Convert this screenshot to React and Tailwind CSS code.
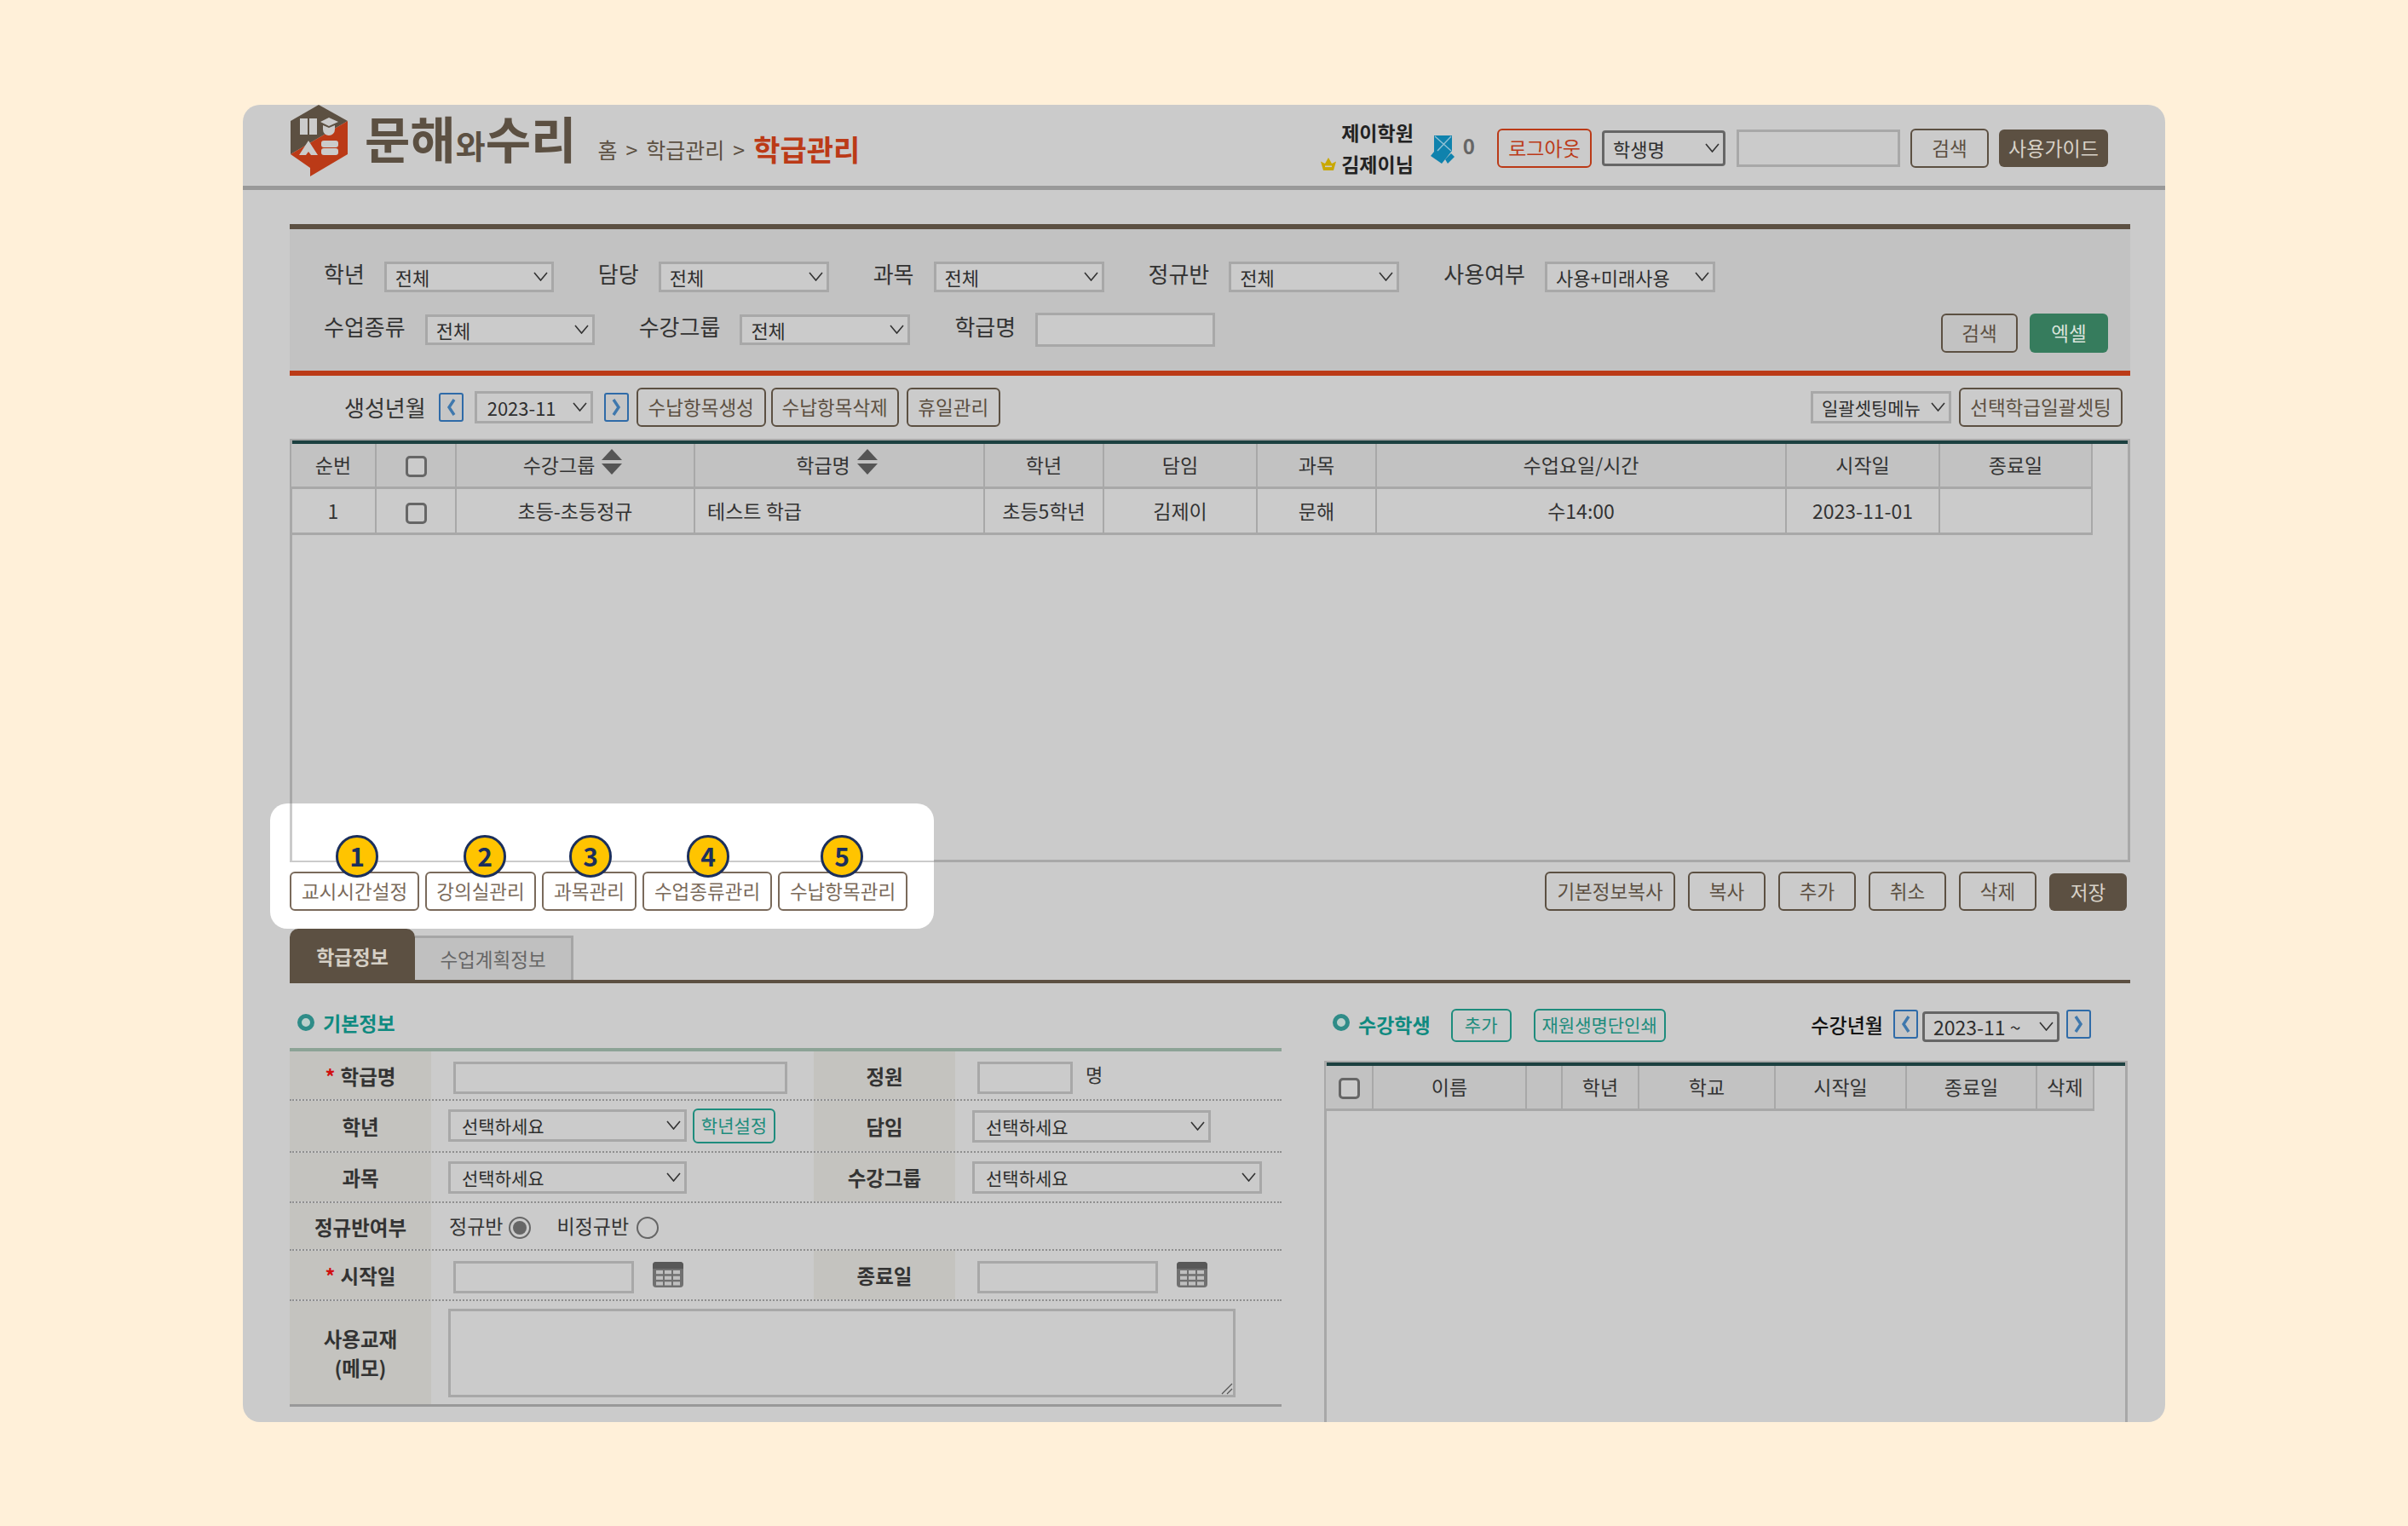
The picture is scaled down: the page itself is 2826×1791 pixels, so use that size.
import React from "react";

const Chevron = () => (
  <svg width="17" height="11" viewBox="0 0 17 11" fill="none" className="shrink-0">
    <path d="M1 1l7.5 9L16 1" stroke="#333" strokeWidth="1.6" />
  </svg>
);

const Sel = ({ className, children }) => (
  <div
    className={`flex shrink-0 items-center justify-between border-[3px] bg-[#cbcbcb] pl-[10px] pr-[4px] text-[22px] text-[#2f2f2f] ${className}`}
  >
    <span className="pt-[2px]">{children}</span>
    <Chevron />
  </div>
);

const Inp = ({ className }) => (
  <div className={`shrink-0 border-[3px] border-[#a8a8a8] bg-[#cbcbcb] ${className}`} />
);

const Btn = ({ className, children }) => (
  <div
    className={`flex h-[46px] shrink-0 items-center justify-center rounded-[6px] border-[2px] border-[#5c5042] text-[22.5px] text-[#5c5042] ${className}`}
  >
    {children}
  </div>
);

const TealBtn = ({ className, children }) => (
  <div
    className={`flex shrink-0 items-center justify-center rounded-[6px] border-[2px] border-[#1e8c7d] text-[21px] text-[#1e8c7d] ${className}`}
  >
    {children}
  </div>
);

const Arrow = ({ dir }) => (
  <div className="flex h-[34px] w-[29px] shrink-0 items-center justify-center rounded-[3px] border-[2px] border-[#2f6ba8] bg-[#c6c6c6]">
    <svg width="13" height="22" viewBox="0 0 13 22" fill="none">
      <path
        d={dir === "left" ? "M10 2L4 11l6 9" : "M3 2l6 9-6 9"}
        stroke="#3f78ad"
        strokeWidth="3.4"
      />
    </svg>
  </div>
);

const Check = () => (
  <div className="mx-auto mt-[6px] h-[25px] w-[25px] rounded-[5px] border-[3px] border-[#666] bg-[#cbcbcb]" />
);

const Sort = () => (
  <svg width="24" height="30" viewBox="0 0 24 30" className="ml-[8px] shrink-0 -translate-y-[3px]">
    <path d="M12 0l12 13H0z" fill="#555" />
    <path d="M0 17h24L12 30z" fill="#555" />
  </svg>
);

const Dot = () => (
  <span className="block h-[20px] w-[20px] shrink-0 rounded-full border-[5px] border-[#2f8c88] bg-[#bcd0cc]" />
);

const Radio = ({ on }) => (
  <span className="flex h-[26px] w-[26px] shrink-0 items-center justify-center rounded-full border-[2px] border-[#666]">
    {on && <span className="h-[16px] w-[16px] rounded-full bg-[#666]" />}
  </span>
);

const Calendar = () => (
  <svg width="36" height="30" viewBox="0 0 36 30" className="mt-[1px] ml-[22px] shrink-0">
    <rect width="36" height="30" rx="4" fill="#707070" />
    <path d="M0 8V4a4 4 0 014-4h28a4 4 0 014 4v4z" fill="#585858" />
    {[4, 14, 24].map((x) =>
      [10, 16.7, 23.3].map((y) => <rect key={`${x}-${y}`} x={x} y={y} width="8" height="4.2" fill="#bfbfbf" />)
    )}
  </svg>
);

const Logo = () => (
  <svg width="68" height="84" viewBox="0 0 68 84" className="shrink-0">
    <path d="M1 58V19L34 0l34 19z" fill="#5c5042" />
    <path d="M1 58l67-39v39L24 84V74z" fill="#bb3a17" />
    <path d="M12 16h9v19h-9zM23 16h9v19h-9z" fill="#cbcbcb" />
    <path d="M36 20l10-5 11 5-11 5z" fill="#cbcbcb" />
    <path d="M39 24l7 3 7-3v5a7 7 0 01-14 0z" fill="#cbcbcb" />
    <path d="M22 42l11 17h-8l-3-4-3 4h-8z" fill="#cbcbcb" />
    <rect x="37" y="42" width="20" height="8" rx="3" fill="#cbcbcb" />
    <rect x="37" y="51" width="20" height="8" rx="3" fill="#cbcbcb" />
  </svg>
);

const Ribbon = () => (
  <svg width="28" height="33" viewBox="0 0 28 33" className="shrink-0">
    <path d="M4 0h21v18L13 33 0 24l4-5z" fill="#0f82ad" />
    <path d="M17 28l7-7 4 4-8 8z" fill="#0f82ad" />
    <path d="M5 1l19 17M24 1L8 18" stroke="#8fc0d4" strokeWidth="1.4" />
  </svg>
);

const Crown = () => (
  <svg width="18" height="15" viewBox="0 0 18 15" className="mr-[6px] shrink-0">
    <path d="M0 4.5L5 7l4-7 4 7 5-2.5L15 15H3z" fill="#c9a800" />
    <rect x="5" y="9.5" width="8" height="1.6" fill="#cbcbcb" />
  </svg>
);

const Header = () => (
  <div className="flex h-[100px] shrink-0 items-start border-b-[5px] border-[#999] pl-[55px] pr-[67px]">
    <Logo />
    <div className="ml-[20px] flex items-baseline font-bold leading-[76px] text-[#5c5042]">
      <span className="text-[58px]">문해</span>
      <span className="text-[38px]">와</span>
      <span className="text-[58px]">수리</span>
    </div>
    <div className="ml-[25px] mt-[27px] flex items-center text-[25px] leading-[50px] text-[#5c5042]">
      <span>홈</span>
      <span className="mx-[10px]">&gt;</span>
      <span>학급관리</span>
      <span className="mx-[10px]">&gt;</span>
      <span className="text-[34px] font-bold text-[#bb3a17]">학급관리</span>
    </div>
    <div className="ml-auto mt-[14px] flex flex-col items-end text-[23px] font-bold leading-[37px] text-[#222]">
      <span>제이학원</span>
      <span className="flex items-center">
        <Crown />
        김제이님
      </span>
    </div>
    <div className="ml-[20px] mt-[36px]">
      <Ribbon />
    </div>
    <span className="ml-[10px] mt-[30px] text-[24px] font-bold text-[#666]">0</span>
    <div className="ml-[26px] mt-[28px] flex h-[46px] w-[111px] shrink-0 items-center justify-center rounded-[6px] border-[2px] border-[#bb3a17] text-[23px] text-[#bb3a17]">
      로그아웃
    </div>
    <Sel className="ml-[12px] mt-[30px] h-[42px] w-[145px] rounded-[4px] border-[2px] border-[#666]">학생명</Sel>
    <Inp className="ml-[13px] mt-[29px] h-[44px] w-[192px]" />
    <Btn className="ml-[12px] mt-[28px] w-[92px]">검색</Btn>
    <div className="ml-[12px] mt-[29px] flex h-[44px] w-[128px] shrink-0 items-center justify-center rounded-[6px] bg-[#5c5042] text-[23px] text-[#d8d2c8]">
      사용가이드
    </div>
  </div>
);

const Field = ({ label, children }) => (
  <div className="flex items-center gap-[23px]">
    <span className="pb-[8px] text-[26px] leading-none text-[#333]">{label}</span>
    {children}
  </div>
);

const selFilter = "h-[36px] border-[#a8a8a8]";

const Filter = () => (
  <div className="mt-[40px] flex h-[178px] flex-col border-y-[6px] border-t-[#5c5042] border-b-[#bb3a17] bg-[#c2c2c2] pl-[40px] pr-[26px] pt-[38px]">
    <div className="flex h-[36px] items-center gap-[52px]">
      <Field label="학년">
        <Sel className={`w-[199px] ${selFilter}`}>전체</Sel>
      </Field>
      <Field label="담당">
        <Sel className={`w-[200px] ${selFilter}`}>전체</Sel>
      </Field>
      <Field label="과목">
        <Sel className={`w-[200px] ${selFilter}`}>전체</Sel>
      </Field>
      <Field label="정규반">
        <Sel className={`w-[200px] ${selFilter}`}>전체</Sel>
      </Field>
      <Field label="사용여부">
        <Sel className={`w-[200px] ${selFilter}`}>사용+미래사용</Sel>
      </Field>
    </div>
    <div className="mt-[24px] flex h-[40px] items-center gap-[52px]">
      <Field label="수업종류">
        <Sel className={`w-[199px] ${selFilter}`}>전체</Sel>
      </Field>
      <Field label="수강그룹">
        <Sel className={`w-[200px] ${selFilter}`}>전체</Sel>
      </Field>
      <Field label="학급명">
        <Inp className="h-[40px] w-[211px]" />
      </Field>
      <div className="ml-auto mt-[8px] flex gap-[14px]">
        <Btn className="w-[90px]">검색</Btn>
        <div className="flex h-[46px] w-[92px] items-center justify-center rounded-[6px] bg-[#367c5d] text-[22.5px] text-[#d9e4dc]">
          엑셀
        </div>
      </div>
    </div>
  </div>
);

const Toolbar = () => (
  <div className="mt-[14px] flex h-[46px] items-center pl-[64px] pr-[9px]">
    <span className="text-[26px] text-[#333]">생성년월</span>
    <div className="ml-[15px]">
      <Arrow dir="left" />
    </div>
    <Sel className="ml-[13px] h-[38px] w-[139px] border-[#a8a8a8] !pl-[12px]">2023-11</Sel>
    <div className="ml-[13px]">
      <Arrow dir="right" />
    </div>
    <Btn className="ml-[9px] w-[152px]">수납항목생성</Btn>
    <Btn className="ml-[6px] w-[150px]">수납항목삭제</Btn>
    <Btn className="ml-[9px] w-[110px]">휴일관리</Btn>
    <Sel className="ml-auto h-[38px] w-[165px] border-[#a8a8a8] !text-[21px]">일괄셋팅메뉴</Sel>
    <Btn className="ml-[9px] w-[192px]">선택학급일괄셋팅</Btn>
  </div>
);

const th = "h-[52px] border-x-[2px] border-b-[3px] border-[#a8a8a8] bg-[#c2c2c2] p-0 pb-[2px] text-center text-[23px] font-normal text-[#333]";
const td = "h-[54px] border-x-[2px] border-b-[3px] border-[#a8a8a8] p-0 text-center text-[23px] text-[#333]";

const ClassTable = () => (
  <div className="mt-[14px] h-[497px] border-[3px] border-t-[2px] border-[#a8a8a8]">
    <div className="h-[4px] bg-[#1c4040]" />
    <table className="ml-[-3px] w-[2114px] table-fixed border-collapse">
      <colgroup>
        {/* 순번 ~ 종료일 */}
        <col className="w-[100px]" />
        <col className="w-[94px]" />
        <col className="w-[280px]" />
        <col className="w-[340px]" />
        <col className="w-[140px]" />
        <col className="w-[180px]" />
        <col className="w-[140px]" />
        <col className="w-[481px]" />
        <col className="w-[180px]" />
        <col className="w-[179px]" />
      </colgroup>
      <thead>
        <tr>
          <th className={th}>순번</th>
          <th className={th}>
            <Check />
          </th>
          <th className={th}>
            <div className="flex items-center justify-center pr-[6px]">
              수강그룹
              <Sort />
            </div>
          </th>
          <th className={th}>
            <div className="flex items-center justify-center pr-[6px]">
              학급명
              <Sort />
            </div>
          </th>
          <th className={th}>학년</th>
          <th className={th}>담임</th>
          <th className={th}>과목</th>
          <th className={th}>수업요일/시간</th>
          <th className={th}>시작일</th>
          <th className={th}>종료일</th>
        </tr>
      </thead>
      <tbody>
        <tr>
          <td className={td}>1</td>
          <td className={td}>
            <Check />
          </td>
          <td className={td}>초등-초등정규</td>
          <td className={`${td} pl-[14px] !text-left`}>테스트 학급</td>
          <td className={td}>초등5학년</td>
          <td className={td}>김제이</td>
          <td className={td}>문해</td>
          <td className={td}>수14:00</td>
          <td className={td}>2023-11-01</td>
          <td className={td} />
        </tr>
      </tbody>
    </table>
  </div>
);

const setupButtons = [
  { label: "교시시간설정", num: 1, w: "w-[152px]", pos: "left-[54px]" },
  { label: "강의실관리", num: 2, w: "w-[130px]", pos: "left-[45px]" },
  { label: "과목관리", num: 3, w: "w-[111px]", pos: "left-[32px]" },
  { label: "수업종류관리", num: 4, w: "w-[152px]", pos: "left-[52px]" },
  { label: "수납항목관리", num: 5, w: "w-[152px]", pos: "left-[50px]" },
];

const ActionBar = () => (
  <div className="relative mt-[11px] flex h-[46px] items-center">
    {/* highlight box over the dimmed page */}
    <div className="absolute left-[-23px] top-[-80px] h-[147px] w-[779px] rounded-[20px] bg-white">
      <div className="ml-[23px] h-[69px] border-b-[2px] border-l-[3px] border-[#cbcbcb]" />
    </div>
    <div className="relative flex gap-[7px]">
      {setupButtons.map((b) => (
        <div key={b.label} className="relative">
          <Btn className={`${b.w} border-[#7a6a5b] bg-white !text-[#7a6a5b]`}>{b.label}</Btn>
          <span
            className={`absolute top-[-43px] flex h-[50px] w-[50px] items-center justify-center rounded-full border-[3px] border-[#1b2f5c] bg-[#ffc400] text-[30px] font-bold text-[#1b2f5c] ${b.pos}`}
          >
            {b.num}
          </span>
        </div>
      ))}
    </div>
    <div className="ml-auto mr-[4px] flex gap-[15px]">
      <Btn className="w-[153px]">기본정보복사</Btn>
      <Btn className="w-[91px]">복사</Btn>
      <Btn className="w-[91px]">추가</Btn>
      <Btn className="w-[91px]">취소</Btn>
      <Btn className="w-[91px]">삭제</Btn>
      <div className="flex h-[44px] w-[91px] items-center justify-center self-end rounded-[6px] bg-[#5c5042] text-[22.5px] text-[#d8d2c8]">
        저장
      </div>
    </div>
  </div>
);

const Tabs = () => (
  <div className="mt-[21px] flex h-[64px] items-end border-b-[4px] border-[#5c5042]">
    <div className="flex h-[60px] w-[147px] items-start justify-center rounded-t-[10px] bg-[#5c5042] pt-[17px] text-[23px] font-bold leading-[30px] text-[#d5cfc5]">
      학급정보
    </div>
    <div className="flex h-[52px] w-[186px] items-center justify-center border-[3px] border-b-0 border-l-0 border-[#a5a5a5] bg-[#c0c0c0] pt-[2px] text-[22.5px] text-[#666]">
      수업계획정보
    </div>
  </div>
);

const Lbl = ({ children, req }) => (
  <div className="flex w-[166px] shrink-0 items-center justify-center bg-[#c4c3bf] pt-[2px] text-center text-[23.5px] font-bold leading-[34px] text-[#333]">
    {req && <span className="mr-[6px] text-[#d01010]">*</span>}
    {children}
  </div>
);

const sel = "h-[38px] border-[#a8a8a8] !pl-[13px] !text-[21px]";
const rowLine = "flex border-b-[2px] border-dotted border-[#8f8f8f]";

const BasicInfo = () => (
  <div className="w-[1164px] shrink-0">
    <div className="flex h-[76px] items-center gap-[10px] pl-[9px] pt-[16px]">
      <Dot />
      <span className="pt-[2px] text-[23px] font-bold text-[#0f8a80]">기본정보</span>
    </div>
    <div className="h-[4px] bg-[#8ca396]" />
    <div className={`h-[58px] ${rowLine}`}>
      <Lbl req>학급명</Lbl>
      <div className="w-[449px] pl-[26px] pt-[12px]">
        <Inp className="h-[38px] w-[392px]" />
      </div>
      <Lbl>정원</Lbl>
      <div className="flex items-start pl-[26px] pt-[12px]">
        <Inp className="h-[38px] w-[112px]" />
        <span className="ml-[15px] text-[22px] leading-[28px] text-[#333]">명</span>
      </div>
    </div>
    <div className={`h-[61px] ${rowLine}`}>
      <Lbl>학년</Lbl>
      <div className="flex w-[449px] items-start pl-[20px] pt-[10px]">
        <Sel className={`w-[280px] ${sel}`}>선택하세요</Sel>
        <TealBtn className="ml-[7px] mt-[-1px] h-[41px] w-[97px]">학년설정</TealBtn>
      </div>
      <Lbl>담임</Lbl>
      <div className="pl-[20px] pt-[11px]">
        <Sel className={`w-[280px] ${sel}`}>선택하세요</Sel>
      </div>
    </div>
    <div className={`h-[59px] ${rowLine}`}>
      <Lbl>과목</Lbl>
      <div className="w-[449px] pl-[20px] pt-[10px]">
        <Sel className={`w-[280px] ${sel}`}>선택하세요</Sel>
      </div>
      <Lbl>수강그룹</Lbl>
      <div className="pl-[20px] pt-[10px]">
        <Sel className={`w-[340px] ${sel}`}>선택하세요</Sel>
      </div>
    </div>
    <div className={`h-[56px] ${rowLine}`}>
      <Lbl>정규반여부</Lbl>
      <div className="flex items-center pl-[21px] pt-[4px] text-[23px] text-[#333]">
        <span className="pb-[4px]">정규반</span>
        <span className="ml-[7px]">
          <Radio on />
        </span>
        <span className="ml-[30px] pb-[4px]">비정규반</span>
        <span className="ml-[9px]">
          <Radio />
        </span>
      </div>
    </div>
    <div className={`h-[59px] ${rowLine}`}>
      <Lbl req>시작일</Lbl>
      <div className="flex w-[449px] items-start pl-[26px] pt-[12px]">
        <Inp className="h-[38px] w-[212px]" />
        <Calendar />
      </div>
      <Lbl>종료일</Lbl>
      <div className="flex items-start pl-[26px] pt-[12px]">
        <Inp className="h-[38px] w-[212px]" />
        <Calendar />
      </div>
    </div>
    <div className="flex h-[124px] border-b-[3px] border-[#999]">
      <Lbl>
        사용교재
        <br />
        (메모)
      </Lbl>
      <div className="pl-[20px] pt-[9px]">
        <div className="relative h-[104px] w-[924px] border-[3px] border-[#a8a8a8]">
          <svg width="14" height="14" viewBox="0 0 14 14" className="absolute bottom-0 right-0">
            <path d="M1 13L13 1M7 13l6-6" stroke="#555" strokeWidth="1.2" />
          </svg>
        </div>
      </div>
    </div>
  </div>
);

const Students = () => (
  <div className="ml-[50px] w-[943px] shrink-0">
    <div className="flex h-[91px] items-start pl-[10px] pr-[43px] pt-[30px]">
      <span className="mt-[6px] block">
        <Dot />
      </span>
      <span className="ml-[10px] text-[23px] font-bold leading-[37px] text-[#0f8a80]">수강학생</span>
      <TealBtn className="ml-[24px] h-[39px] w-[71px]">추가</TealBtn>
      <TealBtn className="ml-[26px] h-[39px] w-[155px]">재원생명단인쇄</TealBtn>
      <span className="ml-auto text-[23px] font-medium leading-[37px] text-[#111]">수강년월</span>
      <span className="ml-[12px] mt-[1px]">
        <Arrow dir="left" />
      </span>
      <Sel className="ml-[5px] mt-[3px] h-[36px] w-[161px] rounded-[4px] border-[2px] border-[#666] !text-[23px]">
        2023-11 ~
      </Sel>
      <span className="ml-[8px] mt-[1px]">
        <Arrow dir="right" />
      </span>
    </div>
    <div className="h-[424px] border-x-[3px] border-t-[2px] border-[#a8a8a8]">
      <div className="h-[4px] bg-[#1c4040]" />
      <table className="ml-[-3px] w-[902px] table-fixed border-collapse">
        <colgroup>
          <col className="w-[56px]" />
          <col className="w-[180px]" />
          <col className="w-[42px]" />
          <col className="w-[90px]" />
          <col className="w-[160px]" />
          <col className="w-[154px]" />
          <col className="w-[153px]" />
          <col className="w-[67px]" />
        </colgroup>
        <thead>
          <tr>
            <th className={th}>
              <Check />
            </th>
            <th className={th}>이름</th>
            <th className={th} />
            <th className={th}>학년</th>
            <th className={th}>학교</th>
            <th className={th}>시작일</th>
            <th className={th}>종료일</th>
            <th className={th}>삭제</th>
          </tr>
        </thead>
      </table>
    </div>
  </div>
);

export default function App() {
  return (
    <div className="flex min-h-[1791px] items-center justify-center bg-[#fff0d9] font-['Noto_Sans_CJK_KR','Noto_Sans',sans-serif]">
      <div className="flex h-[1546px] w-[2256px] flex-col rounded-[20px] bg-[#cbcbcb]">
        <Header />
        <div className="pl-[55px] pr-[41px]">
          <Filter />
          <Toolbar />
          <ClassTable />
          <ActionBar />
          <Tabs />
          <div className="flex">
            <BasicInfo />
            <Students />
          </div>
        </div>
      </div>
    </div>
  );
}
